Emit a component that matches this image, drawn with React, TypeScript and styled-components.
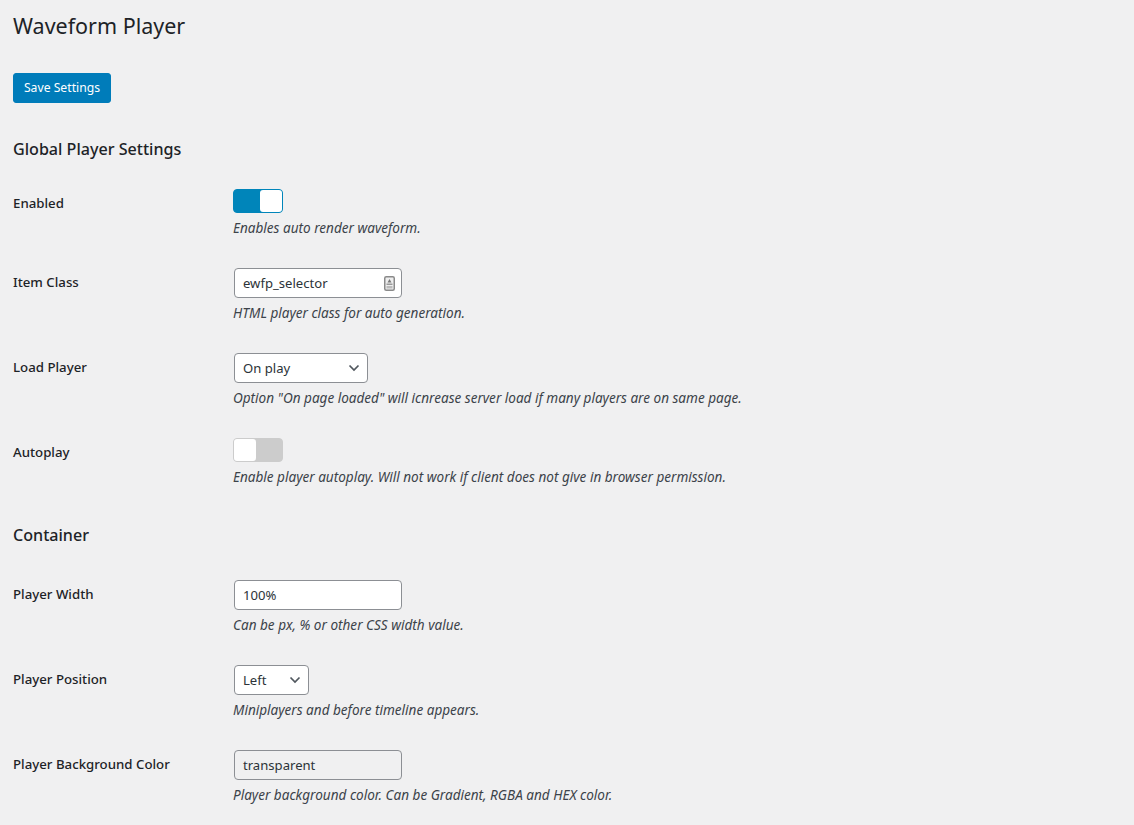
import React from "react";
import styled, { createGlobalStyle } from "styled-components";

const Global = createGlobalStyle`
  html, body { margin: 0; padding: 0; background: #f0f0f1; }
  body { font-family: "Noto Sans", "Open Sans", sans-serif; font-size: 13px; color: #3c434a; }
`;

const Page = styled.div`
  width: 1134px;
  height: 825px;
  overflow: hidden;
  padding: 0 0 0 13px;
  box-sizing: border-box;
`;

const Title = styled.h1`
  margin: 0;
  padding: 10px 0 3px;
  height: 44px;
  box-sizing: border-box;
  font-size: 21.5px;
  font-weight: 400;
  line-height: 31px;
  color: #1d2327;
`;

const SaveButton = styled.button`
  display: block;
  margin: 29px 0 0;
  width: 98px;
  height: 30px;
  padding: 0;
  border: 1px solid #007cba;
  border-radius: 3px;
  background: #007cba;
  color: #fff;
  font: 400 12.2px/28px "Noto Sans", sans-serif;
`;

const Heading = styled.h2<{ $top: number }>`
  margin: ${(p) => p.$top}px 0 0;
  height: 24px;
  font-size: 16.1px;
  font-weight: 500;
  line-height: 24px;
  color: #1d2327;
`;

const Row = styled.div<{ $pad: number; $height: number }>`
  display: grid;
  grid-template-columns: 220px 1fr;
  padding-top: 15px;
  height: ${(p) => p.$height}px;
  box-sizing: border-box;
  margin-top: ${(p) => p.$pad}px;
`;

const Label = styled.div`
  padding-top: 4px;
  font-size: 13.25px;
  font-weight: 500;
  line-height: 20px;
  color: #1d2327;
`;

const Help = styled.p`
  margin: 5px 0 0;
  font-size: 13.55px;
  font-style: italic;
  line-height: 21px;
  color: #3c434a;
`;

const Toggle = styled.div<{ $on: boolean }>`
  display: flex;
  justify-content: ${(p) => (p.$on ? "flex-end" : "flex-start")};
  width: 50px;
  height: 24px;
  box-sizing: border-box;
  border: 1px solid ${(p) => (p.$on ? "#0085ba" : "#ccc")};
  border-radius: 4px;
  background: ${(p) => (p.$on ? "#0085ba" : "#ccc")};
`;

const Knob = styled.span`
  width: 22px;
  height: 22px;
  border-radius: 3px;
  background: #fff;
`;

const Field = styled.div<{ $width: number; $filled: boolean }>`
  display: flex;
  align-items: center;
  justify-content: space-between;
  width: ${(p) => p.$width}px;
  height: 30px;
  margin-left: 1px;
  padding: 0 8px;
  box-sizing: border-box;
  border: 1px solid #8c8f94;
  border-radius: 4px;
  background: ${(p) => (p.$filled ? "#fff" : "transparent")};
  font-size: 13.1px;
  color: #2c3338;
`;

const KeysIcon = styled.svg`
  margin-right: -2px;
`;

const ChevronIcon = styled.svg`
  margin-right: -1px;
`;

const Keys = () => (
  <KeysIcon width="11" height="15" viewBox="0 0 11 15" aria-hidden="true">
    <rect x="0.75" y="0.75" width="9.5" height="13.5" rx="1.5" fill="#eee" stroke="#8a8a8a" strokeWidth="1.5" />
    <path d="M5.5 3 7.5 6.5H3.5Z" fill="#777" />
    <rect x="2.5" y="7.5" width="6" height="1.5" fill="#999" />
    <rect x="2.5" y="10" width="6" height="2.5" fill="#bbb" />
  </KeysIcon>
);

const Chevron = () => (
  <ChevronIcon width="12" height="8" viewBox="0 0 12 8" aria-hidden="true">
    <path d="M1.5 1.5 6 6 10.5 1.5" fill="none" stroke="#50575e" strokeWidth="1.7" />
  </ChevronIcon>
);

export default function App() {
  return (
    <Page>
      <Global />
      <Title>Waveform Player</Title>
      <SaveButton>Save Settings</SaveButton>
      <Heading $top={34}>Global Player Settings</Heading>
      <Row $pad={13} $height={79}>
        <Label>Enabled</Label>
        <div>
          <Toggle $on><Knob /></Toggle>
          <Help>Enables auto render waveform.</Help>
        </div>
      </Row>
      <Row $pad={0} $height={85}>
        <Label>Item Class</Label>
        <div>
          <Field $width={168} $filled>ewfp_selector<Keys /></Field>
          <Help>HTML player class for auto generation.</Help>
        </div>
      </Row>
      <Row $pad={0} $height={85}>
        <Label>Load Player</Label>
        <div>
          <Field $width={134} $filled>On play<Chevron /></Field>
          <Help>Option "On page loaded" will icnrease server load if many players are on same page.</Help>
        </div>
      </Row>
      <Row $pad={0} $height={85}>
        <Label>Autoplay</Label>
        <div>
          <Toggle $on={false}><Knob /></Toggle>
          <Help>Enable player autoplay. Will not work if client does not give in browser permission.</Help>
        </div>
      </Row>
      <Heading $top={15}>Container</Heading>
      <Row $pad={18} $height={85}>
        <Label>Player Width</Label>
        <div>
          <Field $width={168} $filled>100%</Field>
          <Help>Can be px, % or other CSS width value.</Help>
        </div>
      </Row>
      <Row $pad={0} $height={85}>
        <Label>Player Position</Label>
        <div>
          <Field $width={75} $filled>Left<Chevron /></Field>
          <Help>Miniplayers and before timeline appears.</Help>
        </div>
      </Row>
      <Row $pad={0} $height={85}>
        <Label>Player Background Color</Label>
        <div>
          <Field $width={168} $filled={false}>transparent</Field>
          <Help>Player background color. Can be Gradient, RGBA and HEX color.</Help>
        </div>
      </Row>
    </Page>
  );
}
